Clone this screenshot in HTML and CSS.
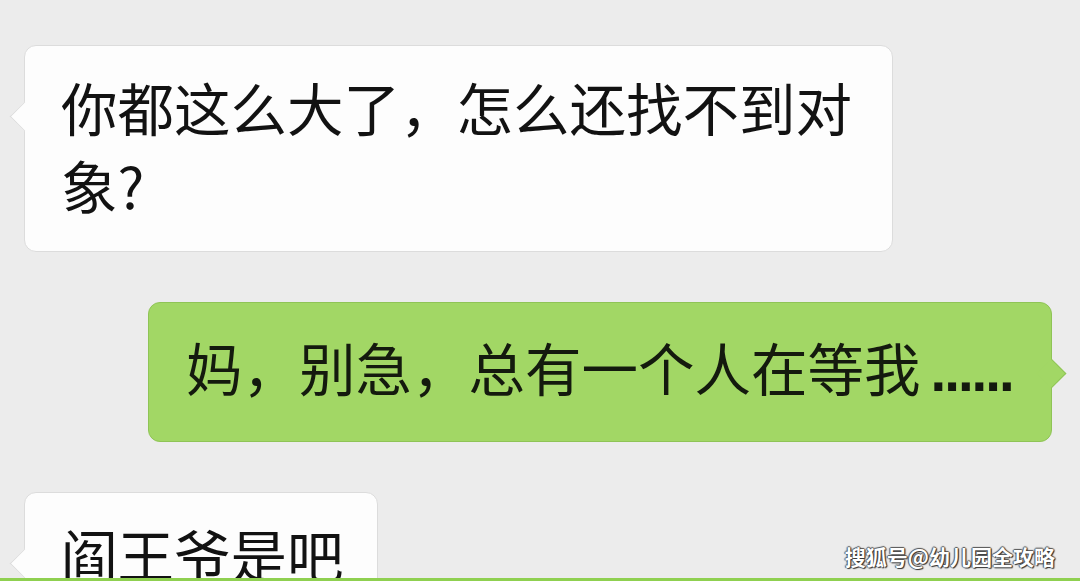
FILE: index.html
```html
<!DOCTYPE html>
<html lang="zh-CN">
<head>
<meta charset="utf-8">
<title>chat</title>
<link rel="stylesheet" href="styles.css">
</head>
<body>
<div class="screen">
  <div class="chat">
    <div class="msg msg-left">
      <div class="bubble bubble-white first">你都这么大了，怎么还找不到对象?</div>
    </div>
    <div class="msg msg-right">
      <div class="bubble bubble-green">妈，别急，总有一个人在等我<span class="dots">......</span></div>
    </div>
    <div class="msg msg-left">
      <div class="bubble bubble-white last">阎王爷是吧</div>
    </div>
  </div>
  <div class="watermark">搜狐号@幼儿园全攻略</div>
  <div class="strip"></div>
</div>
</body>
</html>
```
FILE: styles.css
```css
html, body {
  margin: 0;
  padding: 0;
  background: #ececec;
}
.screen {
  position: relative;
  width: 1080px;
  height: 581px;
  overflow: hidden;
  background: #ececec;
  font-family: "Noto Sans CJK SC", "Noto Sans", sans-serif;
}
.chat {
  display: flex;
  flex-direction: column;
  gap: 50px;
  padding-top: 45px;
}
.msg {
  display: flex;
}
.msg-left {
  justify-content: flex-start;
  padding-left: 24px;
}
.msg-right {
  justify-content: flex-end;
  padding-right: 28px;
}
.bubble {
  position: relative;
  box-sizing: border-box;
  font-size: 56.5px;
  line-height: 78px;
  color: #121212;
  border-radius: 12px;
}
.bubble::before {
  content: "";
  position: absolute;
  top: 60px;
  width: 20px;
  height: 20px;
  transform: rotate(45deg);
}
.bubble-white {
  background: #fdfdfd;
  border: 1px solid #dcdcdc;
  padding: 21px 20px 28px 36px;
}
.bubble-white::before {
  left: -11px;
  background: #fdfdfd;
  border-left: 1px solid #dcdcdc;
  border-bottom: 1px solid #dcdcdc;
}
.first {
  width: 869px;
  height: 207px;
}
.last {
  width: 354px;
  height: 140px;
  white-space: nowrap;
}
.bubble-green {
  width: 904px;
  height: 140px;
  background: #a2d765;
  border: 1px solid #8fc456;
  padding: 24px 20px 36px 37px;
  color: #141a0e;
  white-space: nowrap;
}
.bubble-green::before {
  right: -11px;
  top: 60px;
  background: #a2d765;
  border-right: 1px solid #8fc456;
  border-top: 1px solid #8fc456;
}
.dots {
  font-family: "Liberation Sans", sans-serif;
  font-weight: bold;
  letter-spacing: -2px;
  margin-left: 10px;
}
.watermark {
  position: absolute;
  right: 25px;
  bottom: 12px;
  font-family: "Noto Sans CJK SC", sans-serif;
  font-weight: bold;
  font-size: 21px;
  line-height: 26px;
  color: #ffffff;
  text-shadow: 1px 1px 1px #333, -1px 0 1px #555, 0 -1px 1px #555, 1px 0 1px #444;
}
.strip {
  position: absolute;
  left: 0;
  right: 0;
  bottom: 0;
  height: 3px;
  background: #8fd050;
}
```
